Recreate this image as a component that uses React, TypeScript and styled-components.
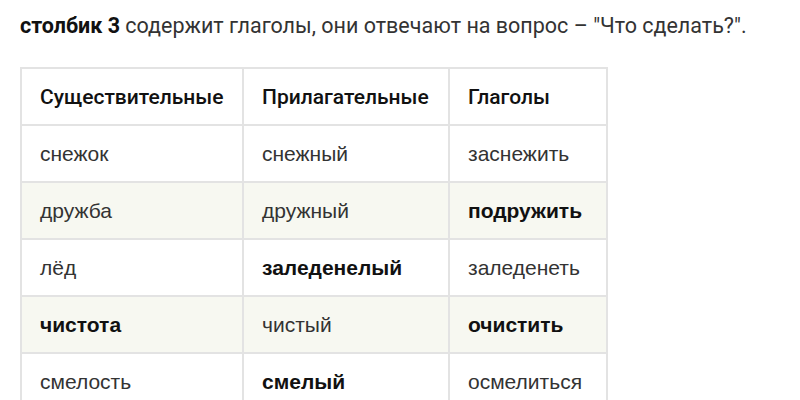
import React from "react"
import styled, { createGlobalStyle } from "styled-components"

const GlobalStyle = createGlobalStyle`
  body {
    margin: 0;
    background: #ffffff;
    font-family: Roboto, "Liberation Sans", sans-serif;
  }
`

const Page = styled.div`
  padding: 11px 20px 0 20px;
`

const Lead = styled.p`
  margin: 0 0 26px 0;
  font-size: 21.5px;
  line-height: 30px;
  color: #333333;
  font-family: Roboto, "Liberation Sans", sans-serif;

  b {
    color: #111111;
    font-weight: 700;
  }
`

const Table = styled.table`
  border-collapse: collapse;
  width: 586px;
  table-layout: fixed;
`

const Row = styled.tr<{ shaded?: boolean }>`
  height: 57px;
  background: ${(props) => (props.shaded ? "#f7f8f1" : "#ffffff")};
`

const HeadCell = styled.th`
  border: 2px solid #e3e3e3;
  padding: 0 18px;
  text-align: left;
  font-family: Roboto, "Liberation Sans", sans-serif;
  font-weight: 500;
  font-size: 21px;
  color: #111111;
  white-space: nowrap;
`

const Cell = styled.td<{ strong?: boolean }>`
  border: 2px solid #e3e3e3;
  padding: 0 18px;
  font-family: "Liberation Sans", Arial, sans-serif;
  font-size: 21px;
  font-weight: ${(props) => (props.strong ? 700 : 400)};
  color: ${(props) => (props.strong ? "#111111" : "#333333")};
  white-space: nowrap;
`

type Word = { text: string; bold?: boolean }

const rows: Word[][] = [
  [{ text: "снежок" }, { text: "снежный" }, { text: "заснежить" }],
  [{ text: "дружба" }, { text: "дружный" }, { text: "подружить", bold: true }],
  [{ text: "лёд" }, { text: "заледенелый", bold: true }, { text: "заледенеть" }],
  [{ text: "чистота", bold: true }, { text: "чистый" }, { text: "очистить", bold: true }],
  [{ text: "смелость" }, { text: "смелый", bold: true }, { text: "осмелиться" }],
]

const App: React.FC = () => {
  return (
    <Page>
      <GlobalStyle />
      <Lead>
        <b>столбик 3</b> содержит глаголы, они отвечают на вопрос – "Что сделать?".
      </Lead>
      <Table>
        <colgroup>
          <col style={{ width: 222 }} />
          <col style={{ width: 206 }} />
          <col style={{ width: 158 }} />
        </colgroup>
        <thead>
          <Row>
            <HeadCell>Существительные</HeadCell>
            <HeadCell>Прилагательные</HeadCell>
            <HeadCell>Глаголы</HeadCell>
          </Row>
        </thead>
        <tbody>
          {rows.map((row, i) => (
            <Row key={i} shaded={i % 2 === 1}>
              {row.map((w, j) => (
                <Cell key={j} strong={w.bold}>
                  {w.text}
                </Cell>
              ))}
            </Row>
          ))}
        </tbody>
      </Table>
    </Page>
  )
}

export default App
